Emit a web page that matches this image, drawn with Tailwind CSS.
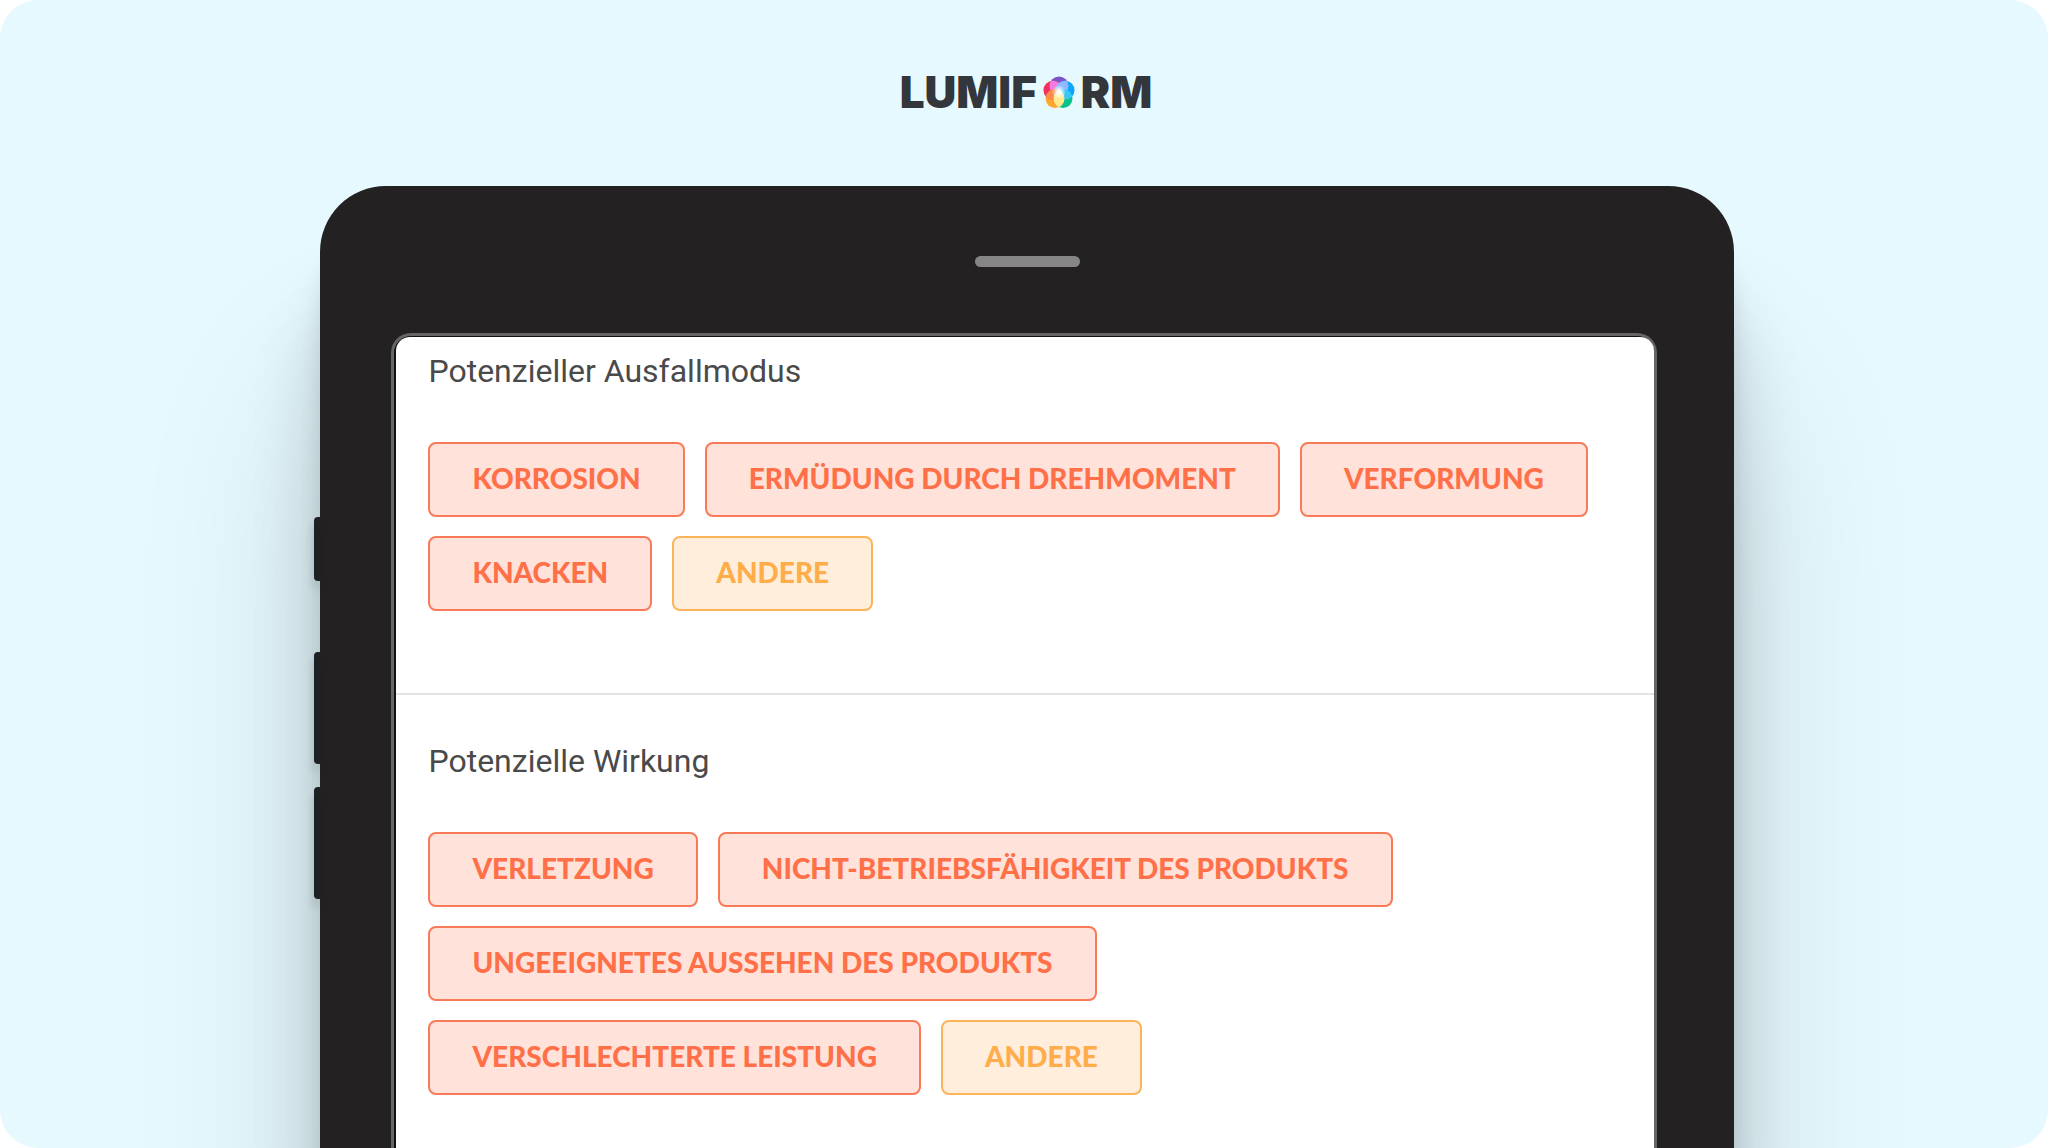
<!DOCTYPE html>
<html lang="de">
<head>
    <meta charset="UTF-8">
    <meta name="viewport" content="width=device-width, initial-scale=1.0">
    <title>Lumiform</title>
    <script src="https://cdn.jsdelivr.net/npm/@tailwindcss/browser@4"></script>
</head>
<body class="bg-white">
<div class="flex flex-col items-center h-screen overflow-hidden rounded-[38px] bg-[#e6f9ff]">
    <header class="flex items-center gap-1.5 ml-1 pt-[66px] font-['Inter',sans-serif] text-[44px] leading-[52px] font-black text-[#33363a]">
        <span>LUMIF</span>
        <svg class="w-8 h-[33px]" viewBox="0 0 32 33" role="img" aria-label="O">
            <defs>
                <clipPath id="top"><circle cx="16" cy="10" r="9.5"/></clipPath>
                <clipPath id="right"><circle cx="22" cy="14.3" r="9.5"/></clipPath>
                <clipPath id="bottom-right"><circle cx="20" cy="22.5" r="9.5"/></clipPath>
                <clipPath id="bottom-left"><circle cx="12" cy="22.5" r="9.5"/></clipPath>
                <clipPath id="left"><circle cx="10" cy="14.3" r="9.5"/></clipPath>
                <radialGradient id="glow">
                    <stop offset="0.2" stop-color="#fff"/>
                    <stop offset="1" stop-color="#fff" stop-opacity="0"/>
                </radialGradient>
            </defs>
            <circle cx="16" cy="10" r="9.5" fill="#7c56c8"/>
            <circle cx="22" cy="14.3" r="9.5" fill="#0aa5ff"/>
            <circle cx="20" cy="22.5" r="9.5" fill="#06c28c"/>
            <circle cx="12" cy="22.5" r="9.5" fill="#ffa733"/>
            <circle cx="10" cy="14.3" r="9.5" fill="#f2305f"/>
            <circle cx="16" cy="10" r="9.5" fill="#f47ae0" clip-path="url(#left)"/>
            <circle cx="22" cy="14.3" r="9.5" fill="#8fb8ff" clip-path="url(#top)"/>
            <circle cx="20" cy="22.5" r="9.5" fill="#35c8f2" clip-path="url(#right)"/>
            <circle cx="10" cy="14.3" r="9.5" fill="#ff8a4d" clip-path="url(#bottom-left)"/>
            <circle cx="12" cy="22.5" r="9.5" fill="#ffe98f" clip-path="url(#bottom-right)"/>
            <circle cx="16" cy="16" r="7" fill="url(#glow)"/>
        </svg>
        <span>RM</span>
    </header>

    <!-- tablet -->
    <div class="relative flex flex-1 flex-col w-[69%] ml-1.5 mt-[68px] pt-[70px] pl-[71px] pr-[77px] rounded-t-[66px] bg-[#232122] shadow-[0_200px_190px_rgba(0,0,0,0.14),0_110px_70px_rgba(0,0,0,0.16),0_50px_25px_-4px_rgba(0,0,0,0.12)]">
        <div class="absolute -left-1.5 top-[331px] w-1.5 h-16 rounded-l-sm bg-[#1e2122] shadow-[0_8px_10px_rgba(0,0,0,0.15)]"></div>
        <div class="absolute -left-1.5 top-[466px] w-1.5 h-28 rounded-l-sm bg-[#1e2122] shadow-[0_8px_10px_rgba(0,0,0,0.15)]"></div>
        <div class="absolute -left-1.5 top-[601px] w-1.5 h-28 rounded-l-sm bg-[#1e2122] shadow-[0_8px_10px_rgba(0,0,0,0.15)]"></div>
        <div class="self-center w-[105px] h-[11px] mb-[66px] ml-2 rounded-full bg-[#868686]"></div>

        <main class="flex-1 rounded-t-[20px] border-t-3 border-x-3 border-[#656565] bg-[#111111] pl-0.5 pt-px font-['Lato',sans-serif] text-[28px] leading-8 font-black text-[#ff7048]">
            <div class="h-full rounded-t-[14px] bg-white">
                <section class="pt-4 pl-8 pr-14 pb-[82px] border-b-2 border-[#e4e4e4]">
                    <h2 class="mb-[53px] font-['Roboto',sans-serif] text-[32px] leading-9 font-normal text-[#4a4a4a]">Potenzieller Ausfallmodus</h2>
                    <div class="flex flex-wrap gap-x-5 gap-y-[19px]">
                        <button type="button" class="px-[42px] pt-[18px] pb-[21px] rounded-lg border-2 border-[#f87a58] bg-[#ffe2da]">KORROSION</button>
                        <button type="button" class="px-[42px] pt-[18px] pb-[21px] rounded-lg border-2 border-[#f87a58] bg-[#ffe2da]">ERMÜDUNG DURCH DREHMOMENT</button>
                        <button type="button" class="px-[42px] pt-[18px] pb-[21px] rounded-lg border-2 border-[#f87a58] bg-[#ffe2da]">VERFORMUNG</button>
                        <button type="button" class="px-[42px] pt-[18px] pb-[21px] rounded-lg border-2 border-[#f87a58] bg-[#ffe2da]">KNACKEN</button>
                        <button type="button" class="px-[42px] pt-[18px] pb-[21px] rounded-lg border-2 border-[#fbb457] bg-[#ffeedc] text-[#ffad4a]">ANDERE</button>
                    </div>
                </section>
                <section class="pt-12 pl-8 pr-14">
                    <h2 class="mb-[53px] font-['Roboto',sans-serif] text-[32px] leading-9 font-normal text-[#4a4a4a]">Potenzielle Wirkung</h2>
                    <div class="flex flex-wrap gap-x-5 gap-y-[19px]">
                        <button type="button" class="px-[42px] pt-[18px] pb-[21px] rounded-lg border-2 border-[#f87a58] bg-[#ffe2da]">VERLETZUNG</button>
                        <button type="button" class="px-[42px] pt-[18px] pb-[21px] rounded-lg border-2 border-[#f87a58] bg-[#ffe2da]">NICHT-BETRIEBSFÄHIGKEIT DES PRODUKTS</button>
                        <button type="button" class="px-[42px] pt-[18px] pb-[21px] rounded-lg border-2 border-[#f87a58] bg-[#ffe2da]">UNGEEIGNETES AUSSEHEN DES PRODUKTS</button>
                        <button type="button" class="px-[42px] pt-[18px] pb-[21px] rounded-lg border-2 border-[#f87a58] bg-[#ffe2da]">VERSCHLECHTERTE LEISTUNG</button>
                        <button type="button" class="px-[42px] pt-[18px] pb-[21px] rounded-lg border-2 border-[#fbb457] bg-[#ffeedc] text-[#ffad4a]">ANDERE</button>
                    </div>
                </section>
            </div>
        </main>
    </div>
</div>
</body>
</html>
